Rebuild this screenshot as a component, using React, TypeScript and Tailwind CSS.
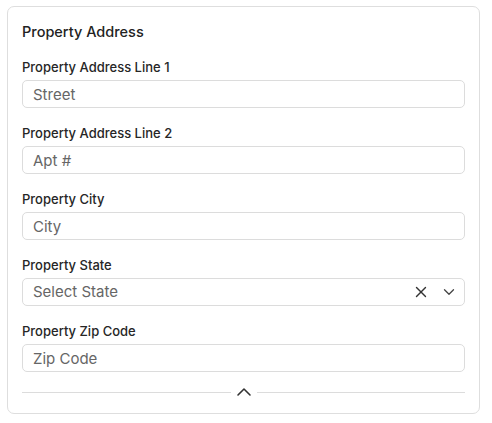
import { X, ChevronDown, ChevronUp } from "lucide-react";

const fields = [
  { label: "Property Address Line 1", placeholder: "Street" },
  { label: "Property Address Line 2", placeholder: "Apt #" },
  { label: "Property City", placeholder: "City" },
];

function Label({ children }: { children: React.ReactNode }) {
  return <div className="text-[13px] leading-[16px] font-medium text-[#262626] mb-[5px]">{children}</div>;
}

export default function App() {
  return (
    <div className="min-h-screen bg-white pt-[6px] pl-[7px]" style={{ fontFamily: "Inter, 'Noto Sans', sans-serif" }}>
      <div className="w-[473px] rounded-[7px] border border-[#dedede] px-[14px] pt-[15px] pb-[15px]">
        <div className="text-[14.5px] leading-[20px] font-medium text-[#222]">Property Address</div>

        <div className="mt-[17px] flex flex-col gap-[17px]">
          {fields.map((f) => (
            <div key={f.label}>
              <Label>{f.label}</Label>
              <input
                placeholder={f.placeholder}
                className="w-full h-[28px] rounded-[5px] border border-[#dcdcdc] px-[10px] text-[15px] text-[#333] placeholder:text-[#666] outline-none"
              />
            </div>
          ))}

          <div>
            <Label>Property State</Label>
            <div className="flex h-[28px] items-center rounded-[5px] border border-[#dcdcdc] pl-[10px] pr-[6px]">
              <span className="flex-1 text-[15px] text-[#666]">Select State</span>
              <X size={18} strokeWidth={1.8} className="text-[#333] mr-[10px]" />
              <ChevronDown size={18} strokeWidth={1.7} className="text-[#444]" />
            </div>
          </div>

          <div>
            <Label>Property Zip Code</Label>
            <input
              placeholder="Zip Code"
              className="w-full h-[28px] rounded-[5px] border border-[#dcdcdc] px-[10px] text-[15px] text-[#333] placeholder:text-[#666] outline-none"
            />
          </div>
        </div>

        <div className="mt-[14px] flex h-[12px] items-center gap-[1px]">
          <div className="flex-1 h-px bg-[#dcdcdc]" />
          <ChevronUp size={24} strokeWidth={1.6} className="text-[#333]" />
          <div className="flex-1 h-px bg-[#dcdcdc]" />
        </div>
      </div>
    </div>
  );
}
